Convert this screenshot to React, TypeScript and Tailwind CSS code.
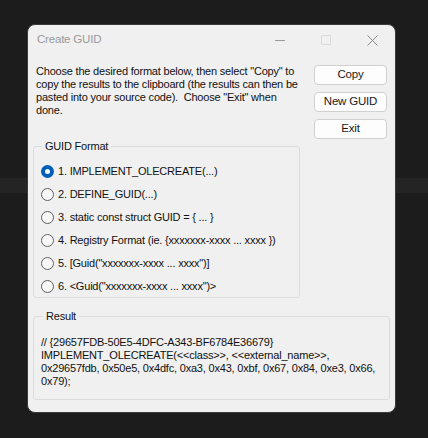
import React, { useState } from 'react'

const FORMATS = [
  '1. IMPLEMENT_OLECREATE(...)',
  '2. DEFINE_GUID(...)',
  '3. static const struct GUID = { ... }',
  '4. Registry Format (ie. {xxxxxxx-xxxx ... xxxx })',
  '5. [Guid("xxxxxxx-xxxx ... xxxx")]',
  '6. <Guid("xxxxxxx-xxxx ... xxxx")>',
]

const font = { fontFamily: '"Liberation Sans", Arial, sans-serif' }

function Radio({ on }: { on: boolean }) {
  return on ? (
    <span className="w-[13px] h-[13px] rounded-full bg-[#005fb8] flex items-center justify-center flex-shrink-0">
      <span className="w-[5px] h-[5px] rounded-full bg-white" />
    </span>
  ) : (
    <span className="w-[13px] h-[13px] rounded-full border border-[#5f5f5f] bg-[#f7f7f7] flex-shrink-0" />
  )
}

function Btn({ label }: { label: string }) {
  return (
    <button className="w-[73px] h-[20px] rounded-[4px] bg-[#fdfdfd] border border-[#d0d0d0] text-[11.5px] tracking-[-0.2px] text-[#1a1a1a] leading-none">
      {label}
    </button>
  )
}

export default function App() {
  const [sel, setSel] = useState(0)
  return (
    <div className="relative w-[428px] h-[438px] bg-[#1c1c1c] overflow-hidden text-[11px] tracking-[-0.2px]" style={font}>
      <div className="absolute left-0 right-0 top-[178px] h-[15px] bg-[#242424]" />
      <div className="relative pt-[24px] pl-[27px]">
        <div className="w-[369px] h-[389px] rounded-[8px] bg-[#f0f0f0] border border-[#3a3a3a] flex flex-col overflow-hidden">
          {/* title bar */}
          <div className="h-[30px] flex items-center pl-[9px] text-[11.5px] text-[#9a9a9a]">
            <span className="flex-1">Create GUID</span>
            <div className="flex items-center">
              <span className="w-[46px] flex justify-center">
                <span className="w-[10px] h-px bg-[#9a9a9a]" />
              </span>
              <span className="w-[46px] flex justify-center">
                <span className="w-[10px] h-[10px] border border-[#dcdcdc]" />
              </span>
              <span className="w-[46px] flex justify-center">
                <svg width="11" height="11" viewBox="0 0 11 11" stroke="#8a8a8a" strokeWidth="1">
                  <path d="M0.5 0.5 L10.5 10.5 M10.5 0.5 L0.5 10.5" />
                </svg>
              </span>
            </div>
          </div>

          <div className="flex pl-[8px] pt-[10px]">
            <p className="w-[270px] leading-[13px] text-[#111] whitespace-nowrap">
              Choose the desired format below, then select "Copy" to<br />
              copy the results to the clipboard (the results can then be<br />
              pasted into your source code).&nbsp; Choose "Exit" when<br />
              done.
            </p>
            <div className="ml-[8px] flex flex-col gap-[7px]">
              <Btn label="Copy" />
              <Btn label="New GUID" />
              <Btn label="Exit" />
            </div>
          </div>

          <fieldset className="ml-[5px] mt-[1px] w-[267px] h-[158px] border border-[#dcdcdc] rounded-[3px] px-[7px]">
            <legend className="text-[#111] px-[3px] ml-[1px] leading-[12px]">GUID Format</legend>
            <div className="flex flex-col gap-[10px] pt-[13px]">
              {FORMATS.map((f, i) => (
                <label key={f} onClick={() => setSel(i)} className="flex items-center gap-[4px] h-[13px] text-[#111] whitespace-nowrap">
                  <Radio on={sel === i} />
                  <span>{f}</span>
                </label>
              ))}
            </div>
          </fieldset>

          <fieldset className="ml-[5px] mt-[12px] w-[357px] h-[90px] border border-[#dcdcdc] rounded-[3px] px-[7px]">
            <legend className="text-[#111] px-[3px] ml-[2px] leading-[12px]">Result</legend>
            <div className="pt-[14px] leading-[13px] text-[#111] whitespace-nowrap">
              <div>// {'{'}29657FDB-50E5-4DFC-A343-BF6784E36679{'}'}</div>
              <div>IMPLEMENT_OLECREATE(&lt;&lt;class&gt;&gt;, &lt;&lt;external_name&gt;&gt;,</div>
              <div>0x29657fdb, 0x50e5, 0x4dfc, 0xa3, 0x43, 0xbf, 0x67, 0x84, 0xe3, 0x66,</div>
              <div>0x79);</div>
            </div>
          </fieldset>
        </div>
      </div>
    </div>
  )
}
